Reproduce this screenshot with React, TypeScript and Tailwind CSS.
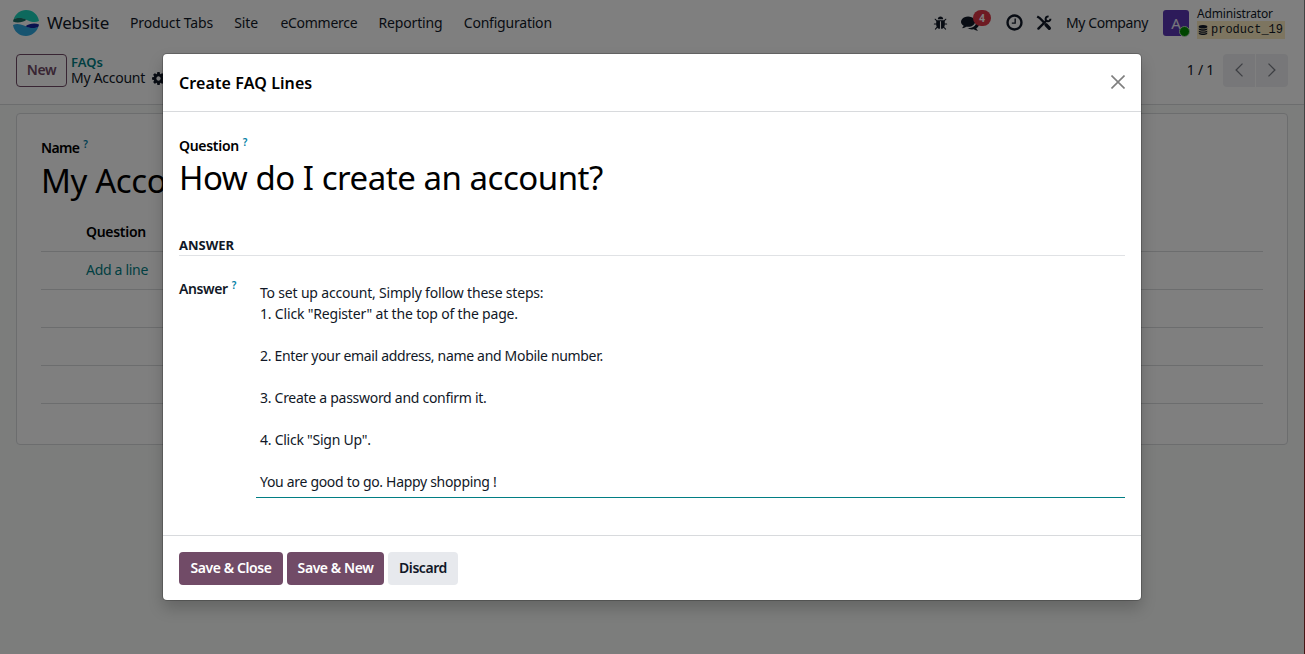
import type { ReactNode } from 'react'

interface NavItem {
  label: string
  className: string
}

interface AnswerLine {
  text: string
  className: string
}

const navItems: NavItem[] = [
  { label: 'Product Tabs', className: 'w-[83px] tracking-[-0.17px]' },
  { label: 'Site', className: 'w-[25px] tracking-[-0.1px]' },
  { label: 'eCommerce', className: 'w-[77px] tracking-[-0.27px]' },
  { label: 'Reporting', className: 'w-[64px] tracking-[-0.16px]' },
  { label: 'Configuration', className: 'w-[88px] tracking-[-0.21px]' },
]

const answerLines: AnswerLine[] = [
  { text: 'To set up account, Simply follow these steps:', className: 'tracking-[-0.19px]' },
  { text: '1. Click "Register" at the top of the page.', className: 'tracking-[-0.18px]' },
  { text: '', className: '' },
  { text: '2. Enter your email address, name and Mobile number.', className: 'tracking-[-0.32px]' },
  { text: '', className: '' },
  { text: '3. Create a password and confirm it.', className: 'tracking-[-0.28px]' },
  { text: '', className: '' },
  { text: '4. Click "Sign Up".', className: 'tracking-[-0.25px]' },
  { text: '', className: '' },
  { text: 'You are good to go. Happy shopping !', className: 'tracking-[-0.31px]' },
]

const icons = {
  bug: 'M1696 960q0 26-19 45t-45 19h-224q0 171-67 290l208 209q19 19 19 45t-19 45q-18 19-45 19t-45-19l-198-197q-5 5-15 13t-42 28.5-65 36.5-82 29-97 13v-896h-128v896q-51 0-101.5-13.5t-87-33-66-39-43.5-32.5l-15-14-183 207q-20 21-48 21-24 0-43-16-19-18-20.5-44.5t15.5-46.5l202-227q-58-114-58-274h-224q-26 0-45-19t-19-45 19-45 45-19h224v-294l-173-173q-19-19-19-45t19-45 45-19 45 19l173 173h844l173-173q19-19 45-19t45 19 19 45-19 45l-173 173v294h224q26 0 45 19t19 45zm-480-576h-640q0-133 93.5-226.5t226.5-93.5 226.5 93.5 93.5 226.5z',
  comments: 'M1408 768q0 139-94 257t-256.5 186.5-353.5 68.5q-86 0-176-16-124 88-278 128-36 9-86 16h-3q-11 0-20.5-8t-11.5-21q-1-3-1-6.5t.5-6.5 2-6l2.5-5 3.5-5.5 4-5 4.5-5 4-4.5q5-6 23-25t26-29.5 22.5-29 25-38.5 20.5-44q-124-72-195-177t-71-224q0-139 94-257t256.5-186.5 353.5-68.5 353.5 68.5 256.5 186.5 94 257zm384 256q0 120-71 224.5t-195 176.5q10 24 20.5 44t25 38.5 22.5 29 26 29.5 23 25q1 1 4 4.5t4.5 5 4 5 3.5 5.5l2.5 5 2 6 .5 6.5-1 6.5q-3 14-13 22t-22 7q-50-7-86-16-154-40-278-128-90 16-176 16-271 0-472-132 58 4 88 4 161 0 309-45t264-129q125-92 192-212t67-254q0-77-23-152 129 71 204 178t75 230z',
  clock: 'M1024 544v448q0 14-9 23t-23 9h-320q-14 0-23-9t-9-23v-64q0-14 9-23t23-9h224v-352q0-14 9-23t23-9h64q14 0 23 9t9 23zm416 352q0-148-73-273t-198-198-273-73-273 73-198 198-73 273 73 273 198 198 273 73 273-73 198-198 73-273zm224 0q0 209-103 385.5t-279.5 279.5-385.5 103-385.5-103-279.5-279.5-103-385.5 103-385.5 279.5-279.5 385.5-103 385.5 103 279.5 279.5 103 385.5z',
  cog: 'M1152 896q0-106-75-181t-181-75-181 75-75 181 75 181 181 75 181-75 75-181zm512-109v222q0 12-8 23t-20 13l-185 28q-19 54-39 91 35 50 107 138 10 12 10 25t-9 23q-27 37-99 108t-94 71q-12 0-26-9l-138-108q-44 23-91 38-16 136-29 186-7 28-36 28h-222q-14 0-24.5-8.5t-11.5-21.5l-28-184q-49-16-90-37l-141 107q-10 9-25 9-14 0-25-11-126-114-165-168-7-10-7-23 0-12 8-23 15-21 51-66.5t54-70.5q-27-50-41-99l-183-27q-13-2-21-12.5t-8-23.5v-222q0-12 8-23t19-13l186-28q14-46 39-92-40-57-107-138-10-12-10-24 0-10 9-23 26-36 98.5-107.5t94.5-71.5q13 0 26 10l138 107q44-23 91-38 16-136 29-186 7-28 36-28h222q14 0 24.5 8.5t11.5 21.5l28 184q49 16 90 37l142-107q9-9 24-9 13 0 25 10 129 119 165 170 7 8 7 22 0 12-8 23-15 21-51 66.5t-54 70.5q26 50 41 98l183 28q13 2 21 12.5t8 23.5z',
  database: 'M896 768q237 0 443-43t325-127v170q0 69-103 128t-280 93.5-385 34.5-385-34.5-280-93.5-103-128v-170q119 84 325 127t443 43zm0 768q237 0 443-43t325-127v170q0 69-103 128t-280 93.5-385 34.5-385-34.5-280-93.5-103-128v-170q119 84 325 127t443 43zm0-384q237 0 443-43t325-127v170q0 69-103 128t-280 93.5-385 34.5-385-34.5-280-93.5-103-128v-170q119 84 325 127t443 43zm0-1152q208 0 385 34.5t280 93.5 103 128v128q0 69-103 128t-280 93.5-385 34.5-385-34.5-280-93.5-103-128v-128q0-69 103-128t280-93.5 385-34.5z',
}

function Icon({ name, className }: { name: keyof typeof icons; className: string }) {
  return (
    <svg viewBox="0 0 1792 1792" fill="currentColor" className={`shrink-0 ${className}`}>
      <path d={icons[name]} />
    </svg>
  )
}

function Logo() {
  return (
    <svg viewBox="0 0 26 26" className="w-[26px] h-[26px] shrink-0">
      <path d="M.7 9.2C2.4 3.9 7.3 0 13 0c6.9 0 12.2 4.8 13 11-3.5 2-7.5 1-11-.6C10.5 8.2 4.5 7.3.7 9.2z" fill="#1ad3bb" />
      <path d="M.7 9.2C4 7.4 9.5 7.5 13.5 9.7 10 12.3 4.5 13.4 0 11.6c.1-.9.4-1.7.7-2.4z" fill="#1b6f66" />
      <path d="M25.3 16.8C23.6 22.1 18.7 26 13 26 6.1 26 .8 21.2 0 15c3.5-2 7.5-1 11 .6 4.5 2.2 10.5 3.1 14.3 1.2z" fill="#2fa8e0" />
      <path d="M25.3 16.8c-3.3 1.8-8.8 1.700-12.800-.5C16 13.7 21.5 12.6 26 14.4c-.1.9-.4 1.7-.7 2.4z" fill="#12239e" />
    </svg>
  )
}

function ToolsIcon() {
  return (
    <svg viewBox="0 0 16 16" className="w-4 h-4 shrink-0" fill="none" stroke="currentColor">
      <path d="M1.2 1.5 3.8 3.2 8 7.4" strokeWidth="2.2" />
      <path d="M10 9.8 13.3 13.2" strokeWidth="3.4" strokeLinecap="round" />
      <path d="M2.4 13.6 10 6" strokeWidth="2.4" strokeLinecap="round" />
      <path d="M12.6 1.6A2.4 2.4 0 1 0 14.4 3.8" strokeWidth="2" />
    </svg>
  )
}

function Help() {
  return <sup className="ml-[4px] text-[10px] leading-none font-semibold tracking-normal text-[#0180a5] top-[-5px]">?</sup>
}

function Navbar() {
  return (
    <header className="flex h-[46px] items-center pl-[13px] pr-[19px]">
      <Logo />
      <span className="ml-2 w-[62px] text-[17px] tracking-[-0.24px] whitespace-nowrap">Website</span>
      <nav className="ml-[21px] flex gap-[21.2px] pb-[2px]">
        {navItems.map(item => (
          <a key={item.label} className={`whitespace-nowrap ${item.className}`}>{item.label}</a>
        ))}
      </nav>
      <div className="ml-auto flex items-center">
        <Icon name="bug" className="w-[15px] h-[15px]" />
        <div className="relative ml-[13px]">
          <Icon name="comments" className="w-[18px] h-[18px]" />
          <span className="absolute left-[12px] -top-[4px] flex h-4 w-[18px] items-center justify-center rounded-full bg-[#dc3545] text-[10px] font-bold text-white">4</span>
        </div>
        <Icon name="clock" className="ml-[26px] mb-px w-[19px] h-[19px]" />
        <div className="ml-[12px]"><ToolsIcon /></div>
        <span className="ml-[14px] w-[82px] pb-[2px] whitespace-nowrap tracking-[-0.42px]">My Company</span>
        <div className="relative ml-[15px] flex size-[26px] items-center justify-center rounded-[3px] bg-[#5b37b5] text-[15px] text-white/90">
          A
          <span className="absolute -right-[1px] -bottom-[1px] size-[11px] rounded-full border border-[#b9dfb9] bg-[#008a00]" />
        </div>
        <div className="ml-2 flex w-[88px] flex-col">
          <span className="h-[14px] text-[12px] leading-[14px] tracking-[-0.16px]">Administrator</span>
          <span className="flex h-[18px] items-center bg-[#fbeac0] pl-[1px] font-['Liberation_Mono',monospace] text-[12px]">
            <Icon name="database" className="mr-[3px] w-[10px] h-[10px]" />
            product_19
          </span>
        </div>
      </div>
    </header>
  )
}

function ControlPanel() {
  return (
    <div className="flex h-[59px] items-start justify-between border-b border-[#d8dadd] px-4 pt-2">
      <div className="flex">
        <button className="flex h-[33px] w-[51px] items-center justify-center rounded-[4px] border border-[#714b67] pb-[2px] font-semibold tracking-[-0.4px] text-[#714b67]">New</button>
        <div className="ml-1 flex flex-col whitespace-nowrap">
          <span className="h-4 text-[13px] leading-[17px] font-semibold text-[#017e84]">FAQs</span>
          <span className="flex h-4 items-center">
            <span className="w-[74px] leading-4 tracking-[-0.27px]">My Account</span>
            <Icon name="cog" className="ml-[6px] w-[15px] h-[15px]" />
          </span>
        </div>
      </div>
      <div className="flex items-center">
        <span className="mr-[9px] pb-[2px] tracking-[-0.25px]">1 / 1</span>
        <div className="flex h-[33px] gap-px text-[#7b7e87]">
          <button className="flex w-8 items-center justify-center rounded-l-[4px] bg-[#eeeff2] pb-px">
            <svg viewBox="0 0 14 14" className="size-[14px]" fill="none" stroke="currentColor" strokeWidth="1.3"><path d="M10.5.6 4.1 7l6.4 6.4" /></svg>
          </button>
          <button className="flex w-8 items-center justify-center rounded-r-[4px] bg-[#eeeff2] pb-px">
            <svg viewBox="0 0 14 14" className="size-[14px]" fill="none" stroke="currentColor" strokeWidth="1.3"><path d="m3.500.6 6.400 6.400-6.400 6.400" /></svg>
          </button>
        </div>
      </div>
    </div>
  )
}

function FormSheet() {
  return (
    <div className="flex-1 bg-[#f8faf9] px-4 pt-2">
      <div className="h-[332px] rounded-[4px] border border-[#d8dadd] bg-white px-6 pt-[24px]">
        <label className="block h-5 leading-5 font-semibold tracking-[-0.65px] text-black">Name<Help /></label>
        <h1 className="h-[50px] text-[33px] leading-[45px] tracking-[-0.4px] text-black">My Account</h1>
        <div className="flex h-[44px] items-center border-b border-[#d8dadd] pl-[45px] pt-[4px] font-semibold tracking-[-0.3px] text-black">Question</div>
        <div className="flex h-[38px] items-center border-b border-[#d8dadd] pb-[2px] pl-[45px] tracking-[-0.3px] text-[#017e84]">Add a line</div>
        <div className="h-[38px] border-b border-[#d8dadd]" />
        <div className="h-[38px] border-b border-[#d8dadd]" />
        <div className="h-[38px] border-b border-[#d8dadd]" />
      </div>
    </div>
  )
}

function DialogButton({ primary, className, children }: { primary?: boolean; className: string; children: ReactNode }) {
  return (
    <button className={`h-[33px] rounded-[4px] pb-[2px] font-semibold whitespace-nowrap ${primary ? 'bg-[#714b67] text-white' : 'bg-[#e7e9ed] text-[#111827]'} ${className}`}>
      {children}
    </button>
  )
}

function FaqDialog() {
  return (
    <div className="flex h-[546px] w-[978px] flex-col rounded-[4px] bg-white shadow-[0_8px_16px_rgba(0,0,0,0.2),0_0_0_1px_rgba(0,0,0,0.2)]">
      <div className="flex h-[58px] items-center justify-between border-b border-[#d8dadd] px-4">
        <h4 className="text-[16px] font-semibold tracking-[0.1px] text-black">Create FAQ Lines</h4>
        <svg viewBox="0 0 14 14" className="mb-[2px] size-[14px]" fill="none" stroke="#7f7f7f" strokeWidth="1.6"><path d="m.5.5 13 13M13.5.5l-13 13" /></svg>
      </div>
      <div className="flex-1 px-4 pt-[24px]">
        <label className="block h-5 leading-5 font-semibold tracking-[-0.3px] text-black">Question<Help /></label>
        <h1 className="h-[50px] text-[33px] leading-[44px] tracking-[-0.47px] whitespace-nowrap text-black">How do I create an account?</h1>
        <div className="mt-[30px] h-[20px] border-b border-[#e0e2e5] text-[13px] leading-[19px] font-bold">ANSWER</div>
        <div className="mt-[22px] flex">
          <label className="block w-[77px] leading-[22px] font-semibold tracking-[-0.4px]">Answer<Help /></label>
          <div className="h-[220px] flex-1 border-b border-[#017e84] pt-[4px] pl-1">
            {answerLines.map((line, i) => (
              <p key={i} className={`h-[21px] leading-[21px] whitespace-nowrap ${line.className}`}>{line.text}</p>
            ))}
          </div>
        </div>
      </div>
      <div className="flex h-[65px] gap-1 border-t border-[#d8dadd] px-4 pt-4">
        <DialogButton primary className="w-[104px] tracking-[-0.4px]">Save &amp; Close</DialogButton>
        <DialogButton primary className="w-[97px] tracking-[-0.43px]">Save &amp; New</DialogButton>
        <DialogButton className="w-[70px] tracking-[-0.42px]">Discard</DialogButton>
      </div>
    </div>
  )
}

export default function App() {
  return (
    <div className="flex h-[654px] w-[1305px] overflow-hidden bg-white font-['Noto_Sans',sans-serif] text-[14px] text-[#111827]">
      <div className="relative flex w-[1304px] flex-col">
        <Navbar />
        <ControlPanel />
        <FormSheet />
        <div className="absolute inset-0 flex items-start justify-center bg-black/50 pt-[54px]">
          <FaqDialog />
        </div>
      </div>
      <div className="flex w-px flex-col">
        <div className="h-[290px] bg-[#434343]" />
        <div className="flex-1 bg-[#4a1515]" />
      </div>
    </div>
  )
}
